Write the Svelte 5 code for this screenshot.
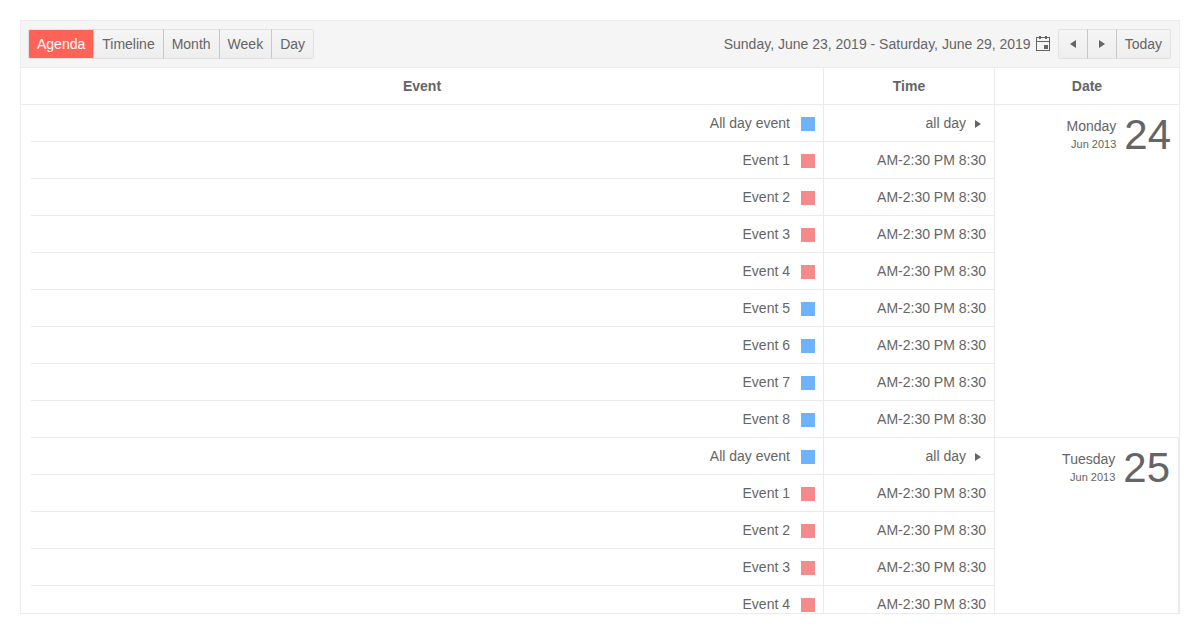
<script>
  const views = ['Agenda', 'Timeline', 'Month', 'Week', 'Day'];
  let view = $state('Agenda');

  const colors = ['blue', 'red', 'red', 'red', 'red', 'blue', 'blue', 'blue', 'blue'];
  const events = colors.map((color, i) => ({
    title: i === 0 ? 'All day event' : `Event ${i}`,
    allDay: i === 0,
    color
  }));
  const days = [
    { day: '24', weekday: 'Monday', month: 'Jun 2013', events },
    { day: '25', weekday: 'Tuesday', month: 'Jun 2013', events: events.slice(0, 5) }
  ];
</script>

<main class="scheduler">
  <header class="toolbar">
    <div class="group" role="group" aria-label="Views">
      {#each views as name}
        <button class="btn" class:selected={view === name} onclick={() => (view = name)}>{name}</button>
      {/each}
    </div>
    <div class="nav">
      <a class="range" href="#calendar">
        <span>Sunday, June 23, 2019 - Saturday, June 29, 2019</span>
        <svg width="16" height="16" viewBox="0 0 16 16" aria-hidden="true">
          <path fill="currentColor" fill-rule="evenodd" d="M1 1h3V0h2v1h4V0h2v1h3v14H1zM2 2v3h12V2h-2v1h-2V2H6v1H4V2zM2 6v8h12V6zM9 9h4v4H9z" />
        </svg>
      </a>
      <div class="group" role="group" aria-label="Navigation">
        <button class="btn icon" aria-label="Previous">
          <svg width="12" height="16" viewBox="0 0 12 16"><path fill="currentColor" d="M9 4v8L3 8z" /></svg>
        </button>
        <button class="btn icon" aria-label="Next">
          <svg width="12" height="16" viewBox="0 0 12 16"><path fill="currentColor" d="M3 4v8l6-4z" /></svg>
        </button>
        <button class="btn">Today</button>
      </div>
    </div>
  </header>

  <div class="content">
    <table>
      <colgroup>
        <col class="col-edge" />
        <col />
        <col class="col-time" />
        <col class="col-date" />
      </colgroup>
      <thead>
        <tr>
          <th colspan="2">Event</th>
          <th class="divided">Time</th>
          <th class="divided">Date</th>
        </tr>
      </thead>
      <tbody>
        {#each days as d, n}
          {#each d.events as event, i}
            <tr>
              <td class="edge"></td>
              <td>
                <div class="entry">
                  <span>{event.title}</span>
                  <span class="mark {event.color}"></span>
                </div>
              </td>
              <td class="divided">
                {#if event.allDay}
                  <div class="entry all-day">
                    <span>all day</span>
                    <svg width="16" height="16" viewBox="0 0 16 16" aria-hidden="true"><path fill="currentColor" d="M5 4v8l6-4z" /></svg>
                  </div>
                {:else}
                  AM-2:30 PM 8:30
                {/if}
              </td>
              {#if i === 0}
                <td class="divided date" class:last={n === days.length - 1} rowspan={d.events.length}>
                  <div class="date-info">
                    <div>
                      <div class="weekday">{d.weekday}</div>
                      <div class="month">{d.month}</div>
                    </div>
                    <strong class="day">{d.day}</strong>
                  </div>
                </td>
              {/if}
            </tr>
          {/each}
        {/each}
      </tbody>
    </table>
  </div>
</main>

<style>
  .scheduler {
    box-sizing: border-box;
    display: flex;
    flex-direction: column;
    height: calc(100vh - 40px);
    margin: 20px;
    border: 1px solid #ebebeb;
    background: #fff;
    color: #656565;
    font: 14px/20px Arial, "Liberation Sans", sans-serif;
    overflow: hidden;
  }
  .toolbar {
    display: flex;
    justify-content: space-between;
    align-items: center;
    padding: 8px 8px 8px 7px;
    border-bottom: 1px solid #ebebeb;
    background: #f5f5f5;
  }
  .group {
    display: flex;
  }
  .btn {
    padding: 4px 8px;
    border: 1px solid rgba(0, 0, 0, 0.08);
    border-radius: 0;
    background: linear-gradient(#f5f5f5, #eeeeee) padding-box;
    color: inherit;
    font: inherit;
    cursor: pointer;
  }
  .btn + .btn {
    margin-left: -1px;
    border-left-color: rgba(0, 0, 0, 0.11);
  }
  .btn:first-child {
    border-radius: 2px 0 0 2px;
  }
  .btn:last-child {
    border-radius: 0 2px 2px 0;
  }
  .btn.selected {
    background: #ff6358 padding-box;
    color: #fff;
  }
  .icon {
    display: flex;
    justify-content: center;
    align-items: center;
  }
  .nav {
    display: flex;
    align-items: center;
    gap: 7px;
  }
  .range {
    display: flex;
    align-items: center;
    gap: 4px;
    color: inherit;
    text-decoration: none;
  }
  .content {
    flex: 1;
    min-height: 0;
    overflow: hidden;
  }
  table {
    width: 100%;
    table-layout: fixed;
    border-collapse: separate;
    border-spacing: 0;
  }
  .col-edge {
    width: 10px;
  }
  .col-time {
    width: 171px;
  }
  .col-date {
    width: 185px;
  }
  th,
  td {
    padding: 8px;
    border: 0 solid #ebebeb;
    border-bottom-width: 1px;
    text-align: right;
    vertical-align: top;
  }
  th {
    text-align: center;
  }
  .divided {
    border-left-width: 1px;
  }
  .edge {
    padding: 0;
    border: 0;
  }
  .entry {
    display: flex;
    justify-content: flex-end;
    align-items: center;
    gap: 11px;
    height: 20px;
  }
  .all-day {
    gap: 4px;
  }
  .entry svg,
  .mark {
    margin-top: 2px;
  }
  .mark {
    width: 14px;
    height: 14px;
  }
  .blue {
    background: #6eb3fa;
  }
  .red {
    background: #f58a8a;
  }
  .last {
    border-right-width: 1px;
  }
  .date-info {
    display: flex;
    justify-content: flex-end;
    gap: 8px;
  }
  .weekday {
    padding-top: 3px;
  }
  .month {
    font-size: 11px;
    line-height: 16px;
  }
  .day {
    font-size: 42px;
    line-height: 44px;
    font-weight: 400;
  }
</style>
